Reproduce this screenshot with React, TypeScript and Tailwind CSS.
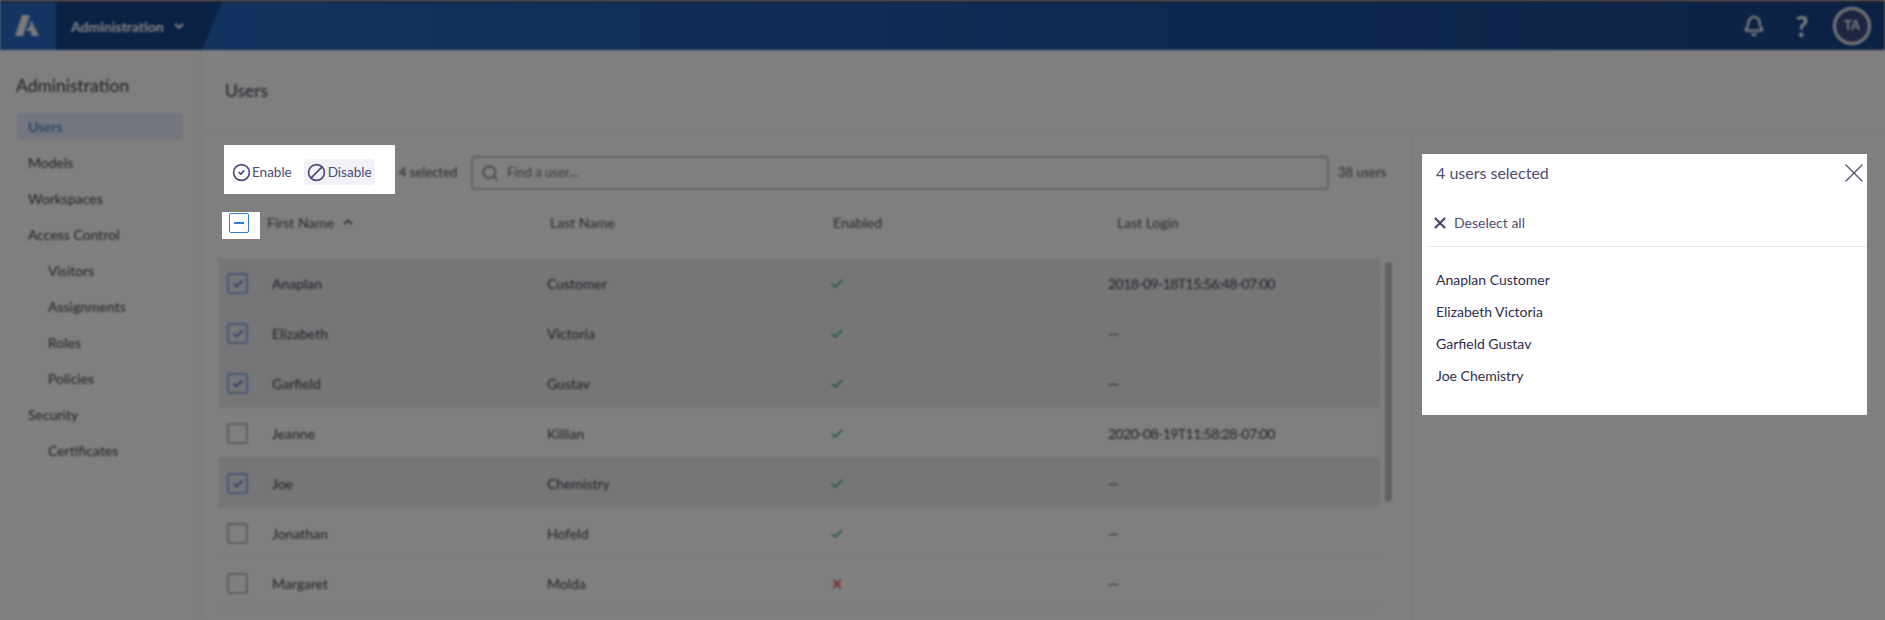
import { Ban, Bell, Check, ChevronDown, ChevronUp, CircleCheck, Search, X } from "lucide-react";

const NAV_ITEMS = [
  { label: "Users", level: 0, active: true },
  { label: "Models", level: 0 },
  { label: "Workspaces", level: 0 },
  { label: "Access Control", level: 0 },
  { label: "Visitors", level: 1 },
  { label: "Assignments", level: 1 },
  { label: "Roles", level: 1 },
  { label: "Policies", level: 1 },
  { label: "Security", level: 0 },
  { label: "Certificates", level: 1 },
];

const USERS = [
  { first: "Anaplan", last: "Customer", enabled: true, login: "2018-09-18T15:56:48-07:00", selected: true },
  { first: "Elizabeth", last: "Victoria", enabled: true, login: "—", selected: true },
  { first: "Garfield", last: "Gustav", enabled: true, login: "—", selected: true },
  { first: "Jeanne", last: "Killian", enabled: true, login: "2020-08-19T11:58:28-07:00", selected: false },
  { first: "Joe", last: "Chemistry", enabled: true, login: "—", selected: true },
  { first: "Jonathan", last: "Hofeld", enabled: true, login: "—", selected: false },
  { first: "Margaret", last: "Molda", enabled: false, login: "—", selected: false },
];

function TopBar() {
  return (
    <header className="relative flex h-[50px] shrink-0 items-stretch overflow-hidden border-t-2 border-[#555] bg-linear-to-r/srgb from-[#2868c4] to-[#184488]">
      <div className="flex w-[56px] items-center justify-center bg-[#2868c4]">
        <svg width="26" height="22" viewBox="0 0 26 22" fill="#f4f4f4">
          <polygon points="7,0 15,0 8,21 0,21" />
          <polygon points="16,5 24,21 17,21 15.5,16 11.5,16 13,12.5 14.5,12.5" />
        </svg>
      </div>
      <div className="flex w-[166px] items-center gap-[8px] bg-[#164488] pl-[15px] [clip-path:polygon(0_0,100%_0,88%_100%,0_100%)]">
        <span className="text-[14px] font-bold text-white">Administration</span>
        <ChevronDown size={14} strokeWidth={3.5} className="text-white" />
      </div>
      <div className="ml-auto flex items-center pr-[14px]">
        <Bell size={22} strokeWidth={2.5} className="text-white" />
        <span className="ml-[29px] w-[16px] text-center text-[28px] font-bold leading-none text-white">?</span>
        <div className="ml-[23px] flex h-[38px] w-[38px] items-center justify-center rounded-full border-[3px] border-[#f0f0f0] bg-[#3d4a80] text-[13px] font-bold text-white">
          TA
        </div>
      </div>
    </header>
  );
}

function Sidebar() {
  return (
    <aside className="w-[201px] shrink-0 border-r border-[#eee] pl-[16px] pt-[24px]">
      <h2 className="text-[17.5px] leading-6 text-[#3f3f50]">Administration</h2>
      <nav className="mt-[10px] flex flex-col">
        {NAV_ITEMS.map((item) => (
          <div
            key={item.label}
            className={
              "flex h-[36px] items-center text-[14px] " +
              (item.level === 1 ? "pl-[32px] " : "pl-[12px] ") +
              (item.active ? "text-[#2f6fd0]" : "text-[#44444f]")
            }
          >
            {item.active ? (
              <span className="-ml-[11px] flex h-[27px] w-[166px] items-center rounded-sm bg-[#e6ecff] pl-[11px]">
                {item.label}
              </span>
            ) : (
              item.label
            )}
          </div>
        ))}
      </nav>
    </aside>
  );
}

function RowCheckbox({ checked }: { checked: boolean }) {
  return (
    <div
      className={
        "flex h-[21px] w-[21px] items-center justify-center rounded-[3px] border-2 " +
        (checked ? "border-[#8fb0ea]" : "border-[#bcbcbc]")
      }
    >
      {checked && <Check size={12} strokeWidth={3} className="text-[#2f63d0]" />}
    </div>
  );
}

function UsersTable() {
  return (
    <div className="flex gap-[5px] pt-[9px]">
      <div className="w-[1162px]">
        <div className="grid h-[46px] grid-cols-[49px_283px_283px_284px_1fr] items-center text-[14px] text-[#55555f]">
          <div />
          <div className="flex items-center gap-[7px]">
            First Name <ChevronUp size={14} strokeWidth={3} />
          </div>
          <div>Last Name</div>
          <div>Enabled</div>
          <div>Last Login</div>
        </div>
        <div className="mt-[13px]">
          {USERS.map((user) => (
            <div
              key={user.first}
              className={
                "grid h-[50px] grid-cols-[45px_275px_283px_278px_1fr] items-center border-b border-[#f2f2f2] pl-[9px] pt-[2px] text-[14px] text-[#44444f] " +
                (user.selected ? "bg-[#ececf0]" : "")
              }
            >
              <RowCheckbox checked={user.selected} />
              <div>{user.first}</div>
              <div>{user.last}</div>
              <div>
                {user.enabled ? (
                  <Check size={14} strokeWidth={2.5} className="text-[#2aa575]" />
                ) : (
                  <X size={14} strokeWidth={2.5} className="text-[#e03a3a]" />
                )}
              </div>
              <div className="tracking-[-0.55px]">{user.login}</div>
            </div>
          ))}
        </div>
      </div>
      <div className="mt-[63px] h-[240px] w-[7px] rounded-full bg-[#c4c4c4]" />
    </div>
  );
}

function SelectionPanel() {
  return (
    <div className="absolute left-[1422px] top-[154px] w-[445px] bg-white">
      <div className="flex h-[38px] items-center justify-between pl-[14px]">
        <span className="text-[16px] text-[#4d4c75]">4 users selected</span>
        <X size={32} strokeWidth={0.9} className="-mr-[3px] text-[#4d4c75]" />
      </div>
      <div className="ml-[6px] mt-[7px] flex h-[48px] items-center gap-[5px] border-b border-[#e8e8f0] pl-[3px] text-[14px] text-[#4d4c75]">
        <X size={18} strokeWidth={3} />
        Deselect all
      </div>
      <div className="pb-[24px] pl-[14px] pt-[16px] text-[14px] text-[#2d2d4d]">
        <div className="flex h-[32px] items-center">Anaplan Customer</div>
        <div className="flex h-[32px] items-center">Elizabeth Victoria</div>
        <div className="flex h-[32px] items-center">Garfield Gustav</div>
        <div className="flex h-[32px] items-center">Joe Chemistry</div>
      </div>
    </div>
  );
}

export default function App() {
  return (
    <div className="relative h-[620px] w-[1885px] overflow-hidden bg-white [font-family:Lato,sans-serif]">
      <div className="flex h-full flex-col blur-[0.8px]">
        <TopBar />
        <div className="flex min-h-0 flex-1">
          <Sidebar />
          <main className="flex-1">
            <div className="flex h-[82px] items-center border-b border-[#eee] pl-[24px] pt-[2px]">
              <h1 className="text-[17.5px] text-[#3f3f50]">Users</h1>
            </div>
            <div className="h-[500px] w-[1212px] border-r border-[#eee] pl-[17px]">
              <div className="flex h-[58px] items-end">
                <div className="w-[181px]" />
                <span className="flex h-[34px] w-[72px] items-center text-[13px] text-[#55555f]">4 selected</span>
                <div className="flex h-[34px] w-[858px] items-center gap-[8px] rounded-[3px] border-2 border-[#c8c8c8] pl-[8px] text-[13px] text-[#77778a]">
                  <Search size={18} strokeWidth={2} />
                  Find a user...
                </div>
                <span className="ml-[9px] flex h-[34px] items-center text-[13px] text-[#55555f]">38 users</span>
              </div>
              <UsersTable />
            </div>
          </main>
        </div>
      </div>

      <div className="absolute inset-0 bg-black/50" />

      <div className="absolute left-[224px] top-[145px] flex h-[49px] w-[171px] items-center bg-white pl-[8px] pt-[5px] text-[13.5px] text-[#4d4c75]">
        <div className="flex items-center gap-[1px]">
          <CircleCheck size={19} strokeWidth={2.1} />
          Enable
        </div>
        <div className="ml-[12px] flex h-[26px] w-[71px] items-center gap-[2px] rounded-sm bg-[#f1f1f7] pl-[3px]">
          <Ban size={19} strokeWidth={2.1} className="-scale-x-100" />
          Disable
        </div>
      </div>

      <div className="absolute left-[222px] top-[212px] flex h-[27px] w-[38px] items-start bg-white pl-[7px] pt-[1px]">
        <div className="flex h-[20px] w-[20px] items-center justify-center rounded-[2px] border-[1.5px] border-[#2f7ae5]">
          <div className="h-[2px] w-[10px] bg-[#2f7ae5]" />
        </div>
      </div>

      <SelectionPanel />
    </div>
  );
}
